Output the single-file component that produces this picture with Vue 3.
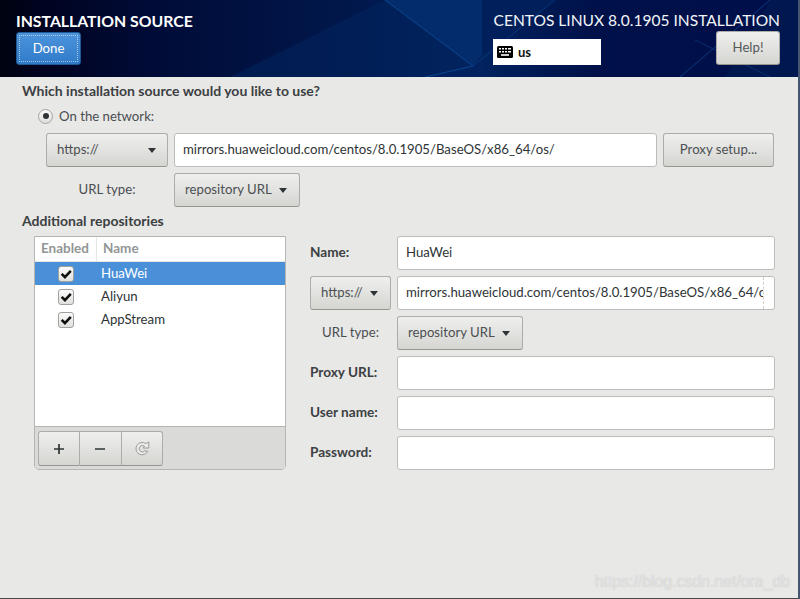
<script setup>
const repos = [
  { name: 'HuaWei', selected: true },
  { name: 'Aliyun', selected: false },
  { name: 'AppStream', selected: false }
]
const url = 'mirrors.huaweicloud.com/centos/8.0.1905/BaseOS/x86_64/os/'
</script>

<template>
  <div class="screen">
    <header class="topbar">
      <svg class="backdrop" viewBox="0 0 798 77" preserveAspectRatio="none" aria-hidden="true">
        <defs>
          <linearGradient id="bg" x1="0" x2="1" y1="0" y2="0">
            <stop offset="0" stop-color="#00030f" />
            <stop offset="0.05" stop-color="#000320" />
            <stop offset="0.2" stop-color="#000c38" />
            <stop offset="0.45" stop-color="#01184c" />
            <stop offset="0.6" stop-color="#00235f" />
            <stop offset="0.75" stop-color="#001048" />
            <stop offset="1" stop-color="#000f4a" />
          </linearGradient>
        </defs>
        <rect width="798" height="77" fill="url(#bg)" />
        <polygon points="385,0 473,66 420,77 230,77" fill="#02245f" opacity="0.55" />
        <polygon points="385,0 482,0 482,55 473,66" fill="#032c6c" />
        <polygon points="473,66 482,55 482,77 425,77" fill="#02235f" />
        <polygon points="482,0 555,0 482,55" fill="#011f5a" />
        <polygon points="725,77 770,0 798,0 798,77" fill="#00174f" />
        <polyline points="385,0 473,66 425,77" fill="none" stroke="#0b478f" stroke-width="1" />
        <polyline points="473,66 555,0" fill="none" stroke="#08387c" stroke-width="1" />
        <polyline points="680,77 770,0" fill="none" stroke="#0a3a80" stroke-width="1" />
        <polyline points="695,40 770,77" fill="none" stroke="#08306f" stroke-width="1" />
      </svg>
      <div class="topleft">
        <h1 class="title">INSTALLATION SOURCE</h1>
        <button class="btn done"><span class="focus">Done</span></button>
      </div>
      <div class="topright">
        <div class="product">CENTOS LINUX 8.0.1905 INSTALLATION</div>
        <div class="toprow">
          <div class="layout">
            <svg class="kbd" viewBox="0 0 16 12" aria-hidden="true">
              <rect width="16" height="12" rx="1.5" fill="#000" />
              <g fill="#fff">
                <rect x="2" y="2" width="2" height="1.5" /><rect x="5" y="2" width="2" height="1.5" />
                <rect x="8" y="2" width="2" height="1.5" /><rect x="11" y="2" width="3" height="1.5" />
                <rect x="2" y="5" width="2" height="1.5" /><rect x="5" y="5" width="2" height="1.5" />
                <rect x="8" y="5" width="2" height="1.5" /><rect x="11" y="5" width="3" height="1.5" />
                <rect x="4" y="8.2" width="8" height="1.6" />
              </g>
            </svg>
            <span>us</span>
          </div>
          <button class="btn help">Help!</button>
        </div>
      </div>
    </header>

    <main class="content">
      <div class="heading first">Which installation source would you like to use?</div>
      <label class="radio-row">
        <span class="radio"><span class="dot"></span></span>
        <span>On the network:</span>
      </label>

      <div class="source-grid">
        <button class="btn select wide"><span>https://</span><i class="caret"></i></button>
        <div class="entry">{{ url }}</div>
        <button class="btn proxy">Proxy setup...</button>
        <div class="plain center">URL type:</div>
        <div class="typecell">
          <button class="btn select type"><span>repository URL</span><i class="caret"></i></button>
        </div>
      </div>

      <div class="heading second">Additional repositories</div>

      <div class="repos">
        <section class="panel">
          <div class="cols">
            <div class="col c1">Enabled</div>
            <div class="col c2">Name</div>
          </div>
          <div class="list">
            <div v-for="r in repos" :key="r.name" class="item" :class="{ selected: r.selected }">
              <span class="checkcell">
                <span class="check">
                  <svg viewBox="0 0 16 16" aria-hidden="true">
                    <path d="M3 7.8 L6.8 11.5 L13.5 4.5" fill="none" stroke="#111" stroke-width="3" />
                  </svg>
                </span>
              </span>
              <span class="rname">{{ r.name }}</span>
            </div>
          </div>
          <div class="toolbar">
            <div class="segmented">
              <button class="btn seg"><svg viewBox="0 0 12 12"><path d="M6 1v10M1 6h10" stroke="#2e3436" stroke-width="1.7" /></svg></button>
              <button class="btn seg"><svg viewBox="0 0 12 12"><path d="M1 6h10" stroke="#2e3436" stroke-width="1.7" /></svg></button>
              <button class="btn seg">
                <svg class="refresh" viewBox="0 0 16 16">
                  <path d="M13.8 10.2A6.2 6.2 0 1 1 11.8 2.6L14.8 0.9V7H9L10.6 5.2A3.3 3.3 0 1 0 10.9 9.9Z" fill="#ececea" stroke="#9a9a98" stroke-width="1" stroke-linejoin="round" />
                </svg>
              </button>
            </div>
          </div>
        </section>

        <section class="form">
          <div class="strong">Name:</div>
          <div class="entry">HuaWei</div>

          <button class="btn select tiny"><span>https://</span><i class="caret"></i></button>
          <div class="entry clipped"><div class="clip">{{ url }}</div></div>

          <div class="plain center">URL type:</div>
          <div class="typecell">
            <button class="btn select type"><span>repository URL</span><i class="caret"></i></button>
          </div>

          <div class="strong">Proxy URL:</div>
          <div class="entry"></div>
          <div class="strong">User name:</div>
          <div class="entry"></div>
          <div class="strong">Password:</div>
          <div class="entry"></div>
        </section>
      </div>
    </main>

    <div class="watermark">https://blog.csdn.net/ora_db</div>
  </div>
</template>

<style scoped>
.screen {
  position: relative;
  box-sizing: border-box;
  width: 800px;
  height: 599px;
  overflow: hidden;
  display: flex;
  flex-direction: column;
  background: #e8e8e7;
  border-right: 2px solid #45556f;
  border-bottom: 1px solid #4a4a4a;
  font-family: Lato, sans-serif;
  font-size: 13.2px;
  color: #2e3436;
}
.topbar {
  position: relative;
  height: 77px;
  flex: none;
  display: flex;
  justify-content: space-between;
  box-sizing: border-box;
  padding: 0 18px 0 16px;
  background: #000f4a;
}
.backdrop {
  position: absolute;
  inset: 0;
  width: 100%;
  height: 100%;
}
.topleft, .topright { position: relative; }
.title {
  margin: 10px 0 1px;
  height: 21px;
  line-height: 21px;
  font-size: 15.8px;
  font-weight: 700;
  color: #fff;
  white-space: nowrap;
}
.btn {
  display: flex;
  align-items: center;
  justify-content: center;
  box-sizing: border-box;
  margin: 0;
  padding: 0 0 2px;
  font: inherit;
  color: #55595a;
  background: linear-gradient(#efefed, #d5d5d2);
  border: 1px solid #acacaa;
  border-bottom-color: #96968f;
  border-radius: 3px;
}
.done {
  width: 65px;
  height: 33px;
  padding: 2px;
  color: #fff;
  background: linear-gradient(#4d94dc, #2f7ac8);
  border-color: #1f5a96;
}
.focus {
  flex: 1;
  align-self: stretch;
  display: flex;
  align-items: center;
  justify-content: center;
  padding-bottom: 2px;
  border: 1px dotted rgba(255, 255, 255, 0.55);
}
.topright {
  width: 287px;
  margin-top: 10px;
}
.product {
  height: 21px;
  line-height: 21px;
  font-size: 15.55px;
  color: #f2f4f7;
  text-align: right;
  white-space: nowrap;
}
.toprow {
  margin-top: 1px;
  display: flex;
  justify-content: space-between;
  align-items: flex-start;
}
.layout {
  margin-top: 7px;
  width: 108px;
  height: 26px;
  box-sizing: border-box;
  padding-left: 4px;
  display: flex;
  align-items: center;
  gap: 5px;
  background: #fff;
  color: #111;
  font-size: 13px;
  font-weight: 700;
}
.kbd { width: 16px; height: 12px; }
.help {
  width: 64px;
  height: 34px;
  margin-top: -1px;
}
.content {
  display: flex;
  flex-direction: column;
}
.heading {
  height: 18px;
  line-height: 18px;
  margin-left: 22px;
  font-size: 14px;
  font-weight: 700;
  color: #3c4042;
}
.heading.first { margin-top: 5px; }
.heading.second { margin-top: 5px; }
.radio-row {
  display: flex;
  align-items: center;
  gap: 6px;
  margin: 7px 0 0 38px;
  height: 18px;
  color: #4a4e50;
}
.radio {
  box-sizing: border-box;
  width: 15px;
  height: 15px;
  border-radius: 50%;
  border: 1px solid #a5a5a2;
  background: linear-gradient(#fafafa, #dededc);
  display: flex;
  align-items: center;
  justify-content: center;
}
.dot {
  width: 6px;
  height: 6px;
  border-radius: 50%;
  background: #2e3436;
}
.source-grid {
  margin: 8px 0 0 46px;
  display: grid;
  grid-template-columns: 122px 483px 111px;
  grid-auto-rows: 34px;
  column-gap: 6px;
  row-gap: 6px;
}
.select {
  justify-content: space-between;
  color: #4c5052;
}
.select.wide { padding: 0 11px 2px 10px; }
.select.tiny { padding: 0 12px 2px 10px; }
.select.type { width: 126px; height: 34px; padding: 0 12px 2px 10px; }
.caret {
  width: 0;
  height: 0;
  border-left: 4.5px solid transparent;
  border-right: 4.5px solid transparent;
  border-top: 5px solid #2e3436;
  margin-top: 3px;
}
.typecell { grid-column: 2 / -1; }
.plain {
  display: flex;
  align-items: center;
  padding-bottom: 2px;
  color: #4a4e50;
}
.center { justify-content: center; }
.entry {
  box-sizing: border-box;
  height: 34px;
  line-height: 30px;
  padding: 0 8px;
  background: #fff;
  border: 1px solid #bcbcb9;
  border-radius: 3px;
  color: #2e3436;
  white-space: nowrap;
}
.proxy { color: #4c5052; }
.repos {
  display: flex;
  gap: 24px;
  margin: 6px 0 0 34px;
}
.panel {
  box-sizing: border-box;
  width: 252px;
  height: 234px;
  display: flex;
  flex-direction: column;
  border: 1px solid #b5b5b2;
  border-radius: 0 0 5px 5px;
  background: #fff;
  overflow: hidden;
}
.cols {
  display: flex;
  height: 25px;
  flex: none;
  color: #929695;
  font-size: 13.5px;
  font-weight: 700;
}
.col {
  display: flex;
  align-items: center;
  padding: 0 0 2px 6px;
  border-bottom: 1px solid #e6e6e5;
}
.c1 { width: 62px; box-sizing: border-box; border-right: 1px solid #e6e6e5; }
.c2 { flex: 1; }
.list { flex: 1; }
.item {
  display: flex;
  align-items: center;
  height: 23px;
  color: #2e3436;
}
.rname { padding-bottom: 2px; }
.item.selected {
  background: #4a90d9;
  color: #fff;
}
.checkcell {
  width: 62px;
  margin-right: 4px;
  flex: none;
  display: flex;
  justify-content: center;
}
.check {
  box-sizing: border-box;
  width: 16px;
  height: 16px;
  display: block;
  border: 1px solid #a0a09d;
  border-radius: 3px;
  background: linear-gradient(#fbfbfb, #e0e0de);
}
.check svg { display: block; width: 14px; height: 14px; }
.toolbar {
  flex: none;
  box-sizing: border-box;
  height: 43px;
  padding: 4px 3px;
  background: #dadad8;
  border-top: 1px solid #b5b5b2;
}
.segmented { display: flex; width: 125px; height: 35px; }
.seg {
  flex: 1;
  padding: 0;
  border-radius: 0;
  border-left-width: 0;
}
.seg:first-child { border-radius: 3px 0 0 3px; border-left-width: 1px; }
.seg:last-child { border-radius: 0 3px 3px 0; }
.seg svg { width: 12px; height: 12px; }
.seg svg.refresh { width: 16px; height: 16px; }
.form {
  width: 465px;
  display: grid;
  grid-template-columns: 81px 378px;
  grid-auto-rows: 34px;
  column-gap: 6px;
  row-gap: 6px;
}
.strong {
  display: flex;
  align-items: center;
  padding-bottom: 2px;
  font-size: 13.6px;
  font-weight: 700;
  color: #3c4042;
  white-space: nowrap;
}
.clipped { padding-right: 0; }
.clip {
  width: 358px;
  height: 32px;
  overflow: hidden;
  border-right: 1px dashed #d0d0ce;
  box-sizing: border-box;
}
.watermark {
  position: absolute;
  right: 8px;
  bottom: 7px;
  font-family: "Liberation Sans", sans-serif;
  font-size: 15.8px;
  color: rgba(255, 255, 255, 0.55);
  text-shadow: 0 0 1px rgba(150, 150, 150, 0.6);
  white-space: nowrap;
}
</style>
